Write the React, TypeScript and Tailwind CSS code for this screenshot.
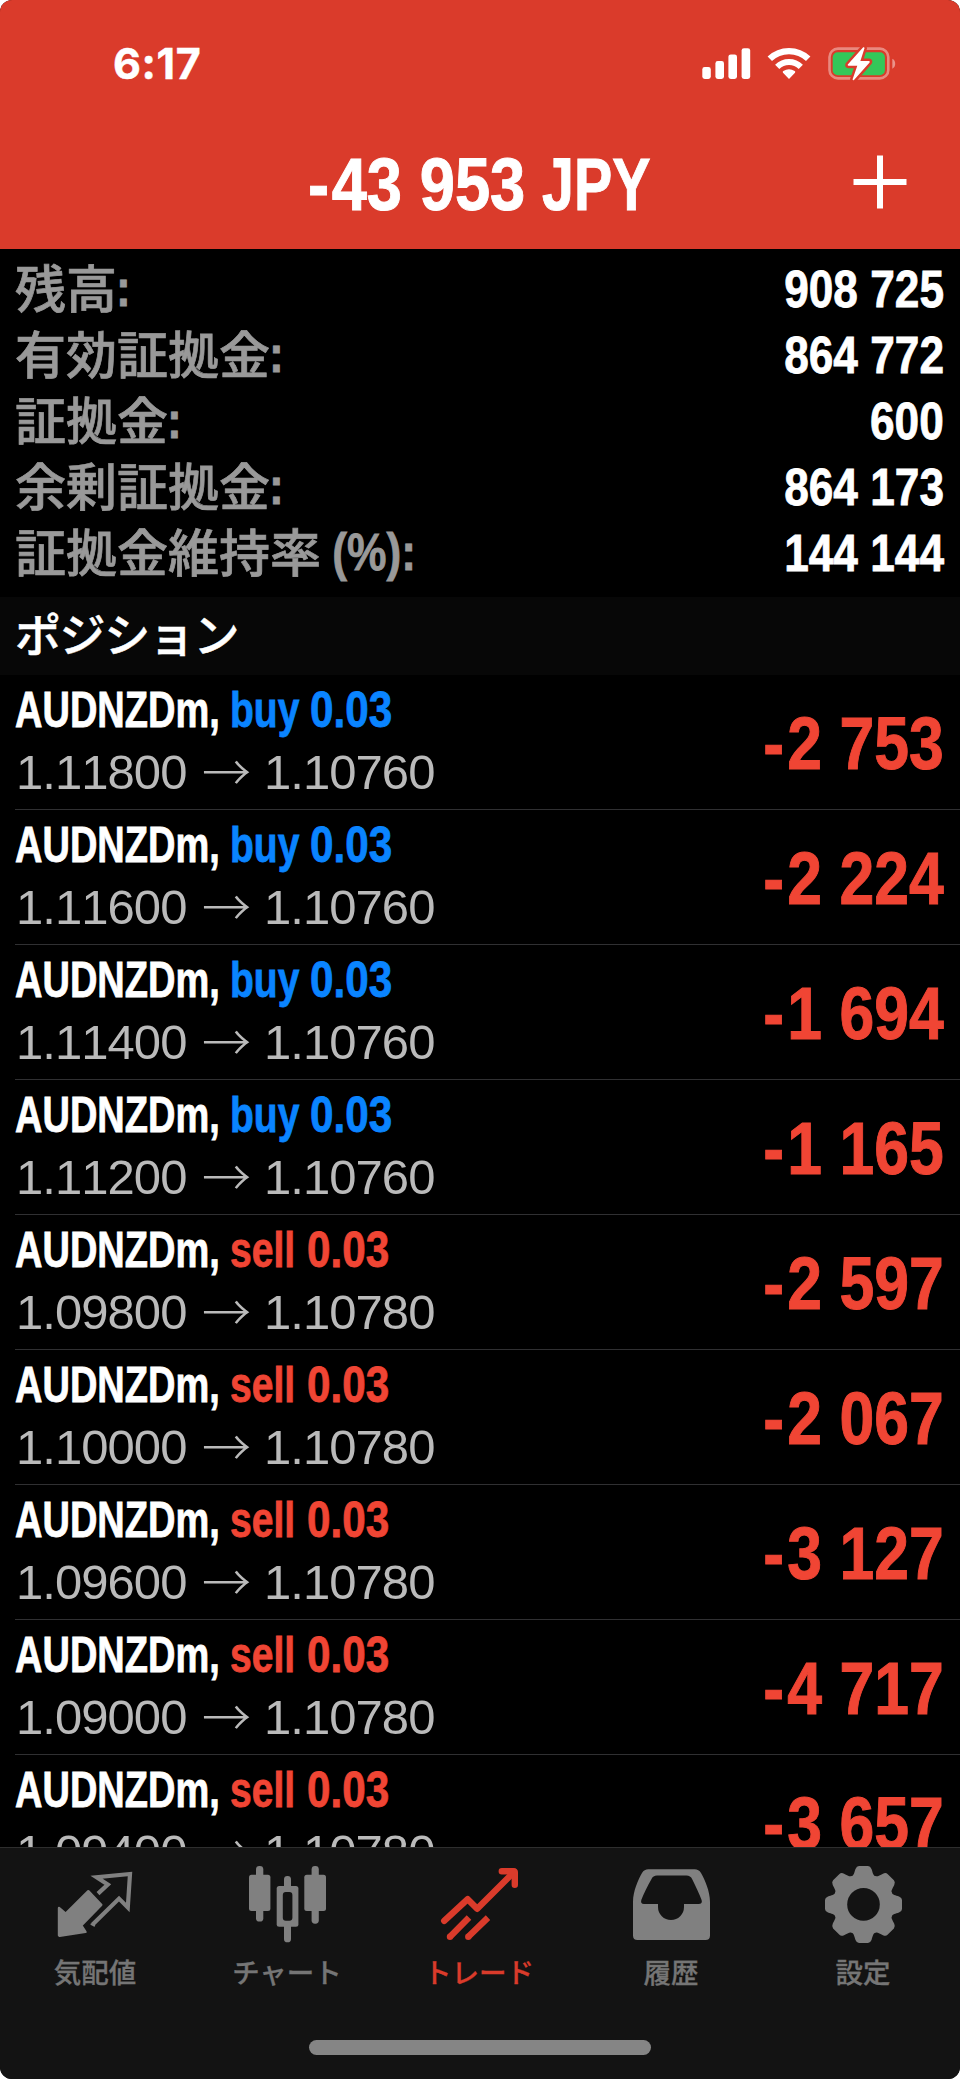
import type { ReactNode } from "react";

const balances = [
  { label: "残高", suffix: ":", value: "908 725" },
  { label: "有効証拠金", suffix: ":", value: "864 772" },
  { label: "証拠金", suffix: ":", value: "600" },
  { label: "余剰証拠金", suffix: ":", value: "864 173" },
  { label: "証拠金維持率", suffix: " (%):", value: "144 144" },
];

type Position = { side: "buy" | "sell"; open: string; current: string; profit: string };

const positions: Position[] = [
  { side: "buy", open: "1.11800", current: "1.10760", profit: "2 753" },
  { side: "buy", open: "1.11600", current: "1.10760", profit: "2 224" },
  { side: "buy", open: "1.11400", current: "1.10760", profit: "1 694" },
  { side: "buy", open: "1.11200", current: "1.10760", profit: "1 165" },
  { side: "sell", open: "1.09800", current: "1.10780", profit: "2 597" },
  { side: "sell", open: "1.10000", current: "1.10780", profit: "2 067" },
  { side: "sell", open: "1.09600", current: "1.10780", profit: "3 127" },
  { side: "sell", open: "1.09000", current: "1.10780", profit: "4 717" },
  { side: "sell", open: "1.09400", current: "1.10780", profit: "3 657" },
];

function StatusIcons() {
  return (
    <svg className="h-12 w-[204px]" viewBox="0 0 204 48" fill="none">
      <g fill="#fff">
        <rect x="6.3" y="27" width="8.5" height="12" rx="2.4" />
        <rect x="19.4" y="21" width="8.6" height="18" rx="2.4" />
        <rect x="32.4" y="14.4" width="8.6" height="24.6" rx="2.4" />
        <rect x="45.6" y="8.2" width="8.6" height="30.8" rx="2.4" />
        <path d="M93 39 87 32.8Q86.2 31.8 87.3 31.1Q93 27.3 98.7 31.1Q99.8 31.8 99 32.8Z" />
      </g>
      <path d="M73.8 18.8A27.8 27.8 0 0 1 112.2 18.8" stroke="#fff" strokeWidth="6.4" />
      <path d="M81.2 26.8A16.9 16.9 0 0 1 104.8 26.8" stroke="#fff" strokeWidth="6" />
      <rect x="133.5" y="8.6" width="58.8" height="29.8" rx="8.5" stroke="#fff" strokeOpacity="0.4" strokeWidth="2.6" />
      <path d="M196.3 18.8Q199.2 20.3 199.2 23.7T196.3 28.7Z" fill="#fff" fillOpacity="0.45" />
      <rect x="136.7" y="12.2" width="52.2" height="23" rx="5" fill="#34c759" />
      <path
        d="M167.2 7.3 151.8 24.6Q151.3 25.7 152.5 25.8H161.3L156.6 39.3Q156.8 40.8 158 40L173.6 22.4Q174.3 21.1 173 21H164.4L168.5 8.2Q168.5 6.7 167.2 7.3Z"
        fill="#fff"
        stroke="#da3b2b"
        strokeWidth="5"
        style={{ paintOrder: "stroke" }}
      />
    </svg>
  );
}

function QuotesIcon() {
  return (
    <svg className="size-20" viewBox="0 0 80 80" fill="none" stroke="#808080" strokeLinejoin="round">
      <path
        d="M32.3 27.2 45.3 40.8 25.3 61.5 29.5 67.9 3.6 71.8 3 71.3V44L9.7 49.6Z"
        fill="#808080"
        strokeWidth="2.4"
      />
      <path d="M42 29.6 51.8 20.5 40.6 13.2 74 10 71.8 43.4 63 34.6 36.6 60.6" strokeWidth="4.2" strokeLinejoin="miter" />
      <path d="M35.4 60.2 38.2 61.6" strokeWidth="2" strokeLinecap="round" />
    </svg>
  );
}

function ChartIcon() {
  return (
    <svg className="size-20" viewBox="0 0 80 80" fill="#808080">
      <rect x="1" y="10.8" width="21.4" height="36.2" rx="2.5" />
      <rect x="8" y="2" width="7.3" height="55.6" rx="3.4" />
      <rect x="56.3" y="10.8" width="21.7" height="36.2" rx="2.5" />
      <rect x="63.6" y="2" width="7.2" height="57.7" rx="3.4" />
      <rect x="28.7" y="22" width="21.7" height="40.7" rx="2.5" />
      <rect x="36" y="12" width="7" height="66.3" rx="3.4" />
      <rect x="34.8" y="28" width="9.6" height="28.8" rx="3" fill="#131313" />
    </svg>
  );
}

function TradeIcon() {
  return (
    <svg className="size-20" viewBox="0 0 80 80" fill="none" stroke="#da3b2b" strokeWidth="6.4">
      <path d="M4.2 56.8 27.7 35.2 37.2 44.8 74 8" strokeLinecap="round" strokeLinejoin="round" />
      <path d="M61.8 7.3H73.5Q74.8 7.3 74.8 8.6V20.8" strokeLinecap="round" />
      <path d="M10.5 72.2 29 53.6M28.8 72.2 48 53.6" />
      <g fill="#da3b2b" stroke="none">
        <circle cx="10" cy="72.7" r="3.2" />
        <circle cx="28.3" cy="72.7" r="3.2" />
      </g>
    </svg>
  );
}

function HistoryIcon() {
  return (
    <svg className="size-20" viewBox="0 0 80 80" fill="#808080">
      <path
        fillRule="evenodd"
        d="M1 38C1 27 6.5 15 10 9Q12.2 5.3 16.5 5.3H62.5Q66.8 5.3 69 9C72.5 15 78 27 78 38V71.5Q78 76 73.5 76H5.5Q1 76 1 71.5ZM25 11.6Q21 11.6 19.4 15.2C15.5 22 11.5 30 9.3 36Q8.3 40 12 40H26V43A13 13 0 0 0 52 43V40H66.5Q70.8 40 69.6 36C67.5 30 63.5 22 60.2 15.2Q58.5 11.6 54.5 11.6Z"
      />
    </svg>
  );
}

const toothAngles = [0, 45, 90, 135, 180, 225, 270, 315];

function SettingsIcon() {
  return (
    <svg className="size-20" viewBox="0 0 80 80" fill="#808080">
      <g transform="translate(39.5 40.4)">
        <circle r="29.5" />
        {toothAngles.map((angle) => (
          <path
            key={angle}
            transform={`rotate(${angle})`}
            d="M-15 -25.5 -12 -28.2C-9.5 -29 -9.3 -32 -8 -35.5Q-6.8 -38.5 -4.5 -38.5H4.5Q6.8 -38.5 8 -35.5C9.3 -32 9.5 -29 12 -28.2L15 -25.5Z"
          />
        ))}
        <circle r="16.3" fill="#131313" />
      </g>
    </svg>
  );
}

function Tab({ icon, label, active }: { icon: ReactNode; label: string; active?: boolean }) {
  return (
    <div className={`flex flex-1 flex-col items-center pt-4 ${active ? "text-[#da3b2b]" : "text-[#757575]"}`}>
      {icon}
      <span className="mt-[7px] mr-[2px] font-['Noto_Sans_CJK_JP',sans-serif] text-[27.5px] leading-10 font-medium [-webkit-text-stroke:0.3px_currentColor]">
        {label}
      </span>
    </div>
  );
}

function PositionRow({ side, open, current, profit }: Position) {
  const buying = side === "buy";
  return (
    <div className="ml-[15px] flex h-[135px] shrink-0 items-center justify-between border-b border-[#303032] pr-4">
      <div className="self-start pt-[5px]">
        <div
          className={`flex text-[50px] leading-[60px] font-bold [-webkit-text-stroke:0.8px_currentColor] ${buying ? "text-[#0a84ff]" : "text-[#f04534]"}`}
        >
          <span className="w-[215px] origin-left scale-x-[0.76] whitespace-nowrap text-white">AUDNZDm,</span>
          <span className={`origin-left scale-x-[0.78] whitespace-nowrap ${buying ? "w-[80px]" : "w-[77px]"}`}>
            {side}
          </span>
          <span className="origin-left scale-x-[0.845] whitespace-nowrap">0.03</span>
        </div>
        <div className="flex text-[49px] leading-[64px] tracking-[-0.95px] text-[#bababa] [font-kerning:none]">
          <span className="ml-px w-[186px]">{open}</span>
          <span className="-mt-0.5 w-[62px] font-['Noto_Sans_CJK_JP',sans-serif] font-light tracking-normal">→</span>
          <span>{current}</span>
        </div>
      </div>
      <span className="origin-right scale-x-[0.845] pt-[4px] text-[74px] leading-none font-bold whitespace-nowrap text-[#f04534] [-webkit-text-stroke:1px_currentColor]">
        <span className="tracking-[4px]">-</span>
        {profit}
      </span>
    </div>
  );
}

export default function App() {
  return (
    <div className="h-[2079px] w-[960px] bg-white">
      <div className="flex h-full flex-col overflow-hidden rounded-xl bg-black font-['Liberation_Sans',Arial,sans-serif] text-white">
        <header className="flex h-[249px] shrink-0 flex-col bg-[#da3b2b]">
          <div className="flex h-[128px] items-center justify-between pr-[60px] pb-px pl-[113px]">
            <span className="font-['Inter',sans-serif] text-[43px] font-bold tracking-[0.6px] [-webkit-text-stroke:0.5px_currentColor]">
              6:17
            </span>
            <StatusIcons />
          </div>
          <div className="grid grid-cols-[1fr_auto_1fr] items-center">
            <span />
            <h1 className="flex w-[344px] pt-[3px] text-[74.5px] leading-[108px] font-bold whitespace-nowrap [-webkit-text-stroke:1px_currentColor]">
              <span className="w-[234px] origin-left scale-x-[0.85]">
                <span className="tracking-[3px]">-</span>43 953
              </span>
              <span className="origin-left scale-x-[0.77]">JPY</span>
            </h1>
            <svg
              className="mr-[53px] mb-[3px] size-[54px] justify-self-end"
              viewBox="0 0 54 54"
              stroke="#fff"
              strokeWidth="6"
            >
              <path d="M27 .5V53.5M.5 27H53.5" />
            </svg>
          </div>
        </header>

        <section className="h-[348px] shrink-0 pt-[6px]">
          {balances.map((row) => (
            <div key={row.label} className="flex h-[66px] items-center justify-between pr-4 pl-[15px] font-bold">
              <div className="flex items-center text-[#999999]">
                <span className="-mt-1 font-['Noto_Sans_CJK_JP',sans-serif] text-[51px] leading-[66px] font-medium [-webkit-text-stroke:0.7px_currentColor]">
                  {row.label}
                </span>
                <span className="-ml-px origin-left scale-x-[0.87] pt-0.5 text-[51px] leading-[66px] whitespace-pre [-webkit-text-stroke:0.8px_currentColor]">
                  {row.suffix}
                </span>
              </div>
              <span className="origin-right scale-x-[0.85] pt-0.5 text-[52px] leading-[66px] whitespace-nowrap [-webkit-text-stroke:0.8px_currentColor]">
                {row.value}
              </span>
            </div>
          ))}
        </section>

        <h2 className="flex h-[78px] shrink-0 items-center bg-[#070707] pb-[8px] pl-[15px] font-['Noto_Sans_CJK_JP',sans-serif] text-[46px] leading-none font-medium tracking-[-1.4px] [-webkit-text-stroke:0.5px_currentColor]">
          ポジション
        </h2>

        <main className="flex min-h-0 flex-1 flex-col overflow-hidden">
          {positions.map((position) => (
            <PositionRow key={position.profit} {...position} />
          ))}
        </main>

        <footer className="flex h-[232px] shrink-0 flex-col items-center border-t border-[#2e2e2e] bg-[#131313]">
          <nav className="flex w-full flex-1">
            <Tab icon={<QuotesIcon />} label="気配値" />
            <Tab icon={<ChartIcon />} label="チャート" />
            <Tab icon={<TradeIcon />} label="トレード" active />
            <Tab icon={<HistoryIcon />} label="履歴" />
            <Tab icon={<SettingsIcon />} label="設定" />
          </nav>
          <div className="mb-6 h-[15px] w-[342px] rounded-full bg-[#858585]" />
        </footer>
      </div>
    </div>
  );
}
